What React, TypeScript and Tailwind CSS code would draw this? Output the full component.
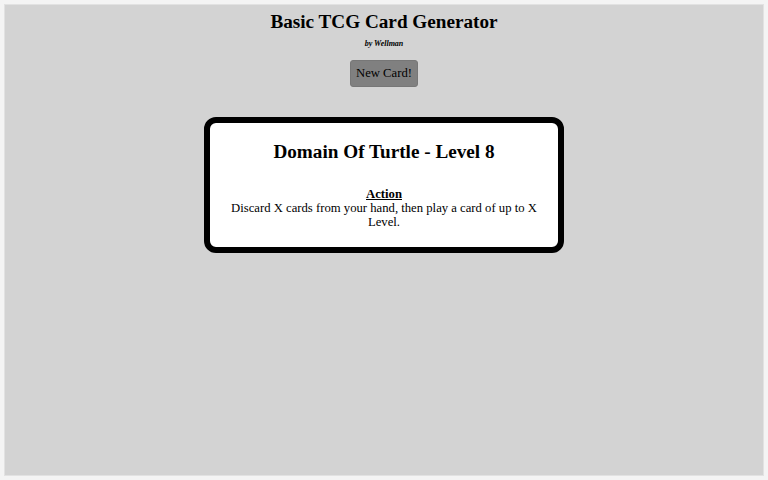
import React from 'react';

const serif = { fontFamily: '"Liberation Serif", "Times New Roman", serif' };

export default function App() {
  return (
    <div className="h-[480px] bg-[#f4f4f4] p-1" style={serif}>
      <div className="flex h-full flex-col items-center border border-[#e2e2e2] bg-[#d3d3d3] text-black">
        <h1 className="mt-[1px] text-[19.2px] font-bold leading-[32px]">Basic TCG Card Generator</h1>
        <p className="mt-[1px] text-[8px] font-bold italic leading-[10px]">by Wellman</p>
        <button className="mt-[11px] h-[27px] rounded-[3px] border border-[#777] bg-[#808080] px-[5px] text-[12.7px] leading-[25px]">
          New Card!
        </button>
        <div className="mt-[30px] w-[360px] rounded-[12px] border-[6px] border-black bg-white px-[20px] pt-[14px] pb-[18px] text-center">
          <h2 className="text-[19.2px] font-bold leading-[30px]">Domain Of Turtle - Level 8</h2>
          <div className="mt-[20px] text-[12.7px] leading-[14px]">
            <div className="font-bold underline">Action</div>
            <div>Discard X cards from your hand, then play a card of up to X Level.</div>
          </div>
        </div>
      </div>
    </div>
  );
}
